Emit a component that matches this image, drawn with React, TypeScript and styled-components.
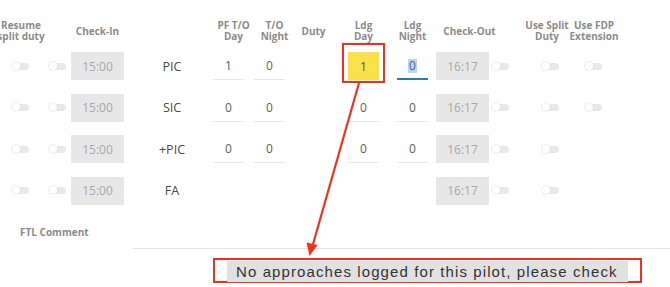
import { Fragment } from "react";
import styled, { createGlobalStyle, css } from "styled-components";

const GlobalStyle = createGlobalStyle`
    body {
        margin: 0;
        background: #fff;
        font-family: "Open Sans", "Noto Sans", sans-serif;
    }
`;

const COLS = "42px 29px 53px 89px 41px 41px 37px 63px 35px 61px 29px 54px 40px";

const Page = styled.div`
    position: relative;
    width: 670px;
    height: 287px;
    overflow: hidden;
    background: #fff;
`;

const HeaderRow = styled.div`
    display: grid;
    grid-template-columns: ${COLS};
    height: 34px;
    padding-top: 14px;
    margin-bottom: 4px;
`;

const HeaderCell = styled.div<{ $pad?: number }>`
    display: flex;
    align-items: center;
    justify-content: center;
    padding-left: ${(p) => p.$pad ?? 0}px;
    font-size: 10px;
    line-height: 11px;
    font-weight: 700;
    color: #8c8c8c;
    text-align: center;
    white-space: nowrap;
`;

const Body = styled.div`
    display: grid;
    grid-template-columns: ${COLS};
    grid-auto-rows: 28px;
    row-gap: 13.6px;
`;

const Cell = styled.div<{ $justify?: string; $pad?: number }>`
    position: relative;
    display: flex;
    align-items: center;
    justify-content: ${(p) => p.$justify ?? "center"};
    padding-left: ${(p) => p.$pad ?? 0}px;
`;

const Toggle = styled.span`
    position: relative;
    width: 16px;
    height: 7px;
    border-radius: 4px;
    background: #e8e8e8;
    &::before {
        content: "";
        position: absolute;
        left: -1px;
        top: -1px;
        width: 8px;
        height: 8px;
        border-radius: 50%;
        background: #fff;
        box-shadow: 0 0 0 0.6px #dcdcdc;
    }
`;

const TimeBox = styled.div`
    width: 53px;
    height: 28px;
    display: flex;
    align-items: center;
    justify-content: center;
    background: #e7e7e7;
    color: #a8a8a8;
    font-size: 12px;
`;

const Crew = styled.span`
    font-size: 12.5px;
    color: #4a4a4a;
    margin-left: 7px;
`;

const NumInput = styled.div<{ $focused?: boolean; $marked?: boolean }>`
    width: 31px;
    height: 28px;
    box-sizing: border-box;
    display: flex;
    align-items: center;
    justify-content: center;
    font-size: 12px;
    color: #606060;
    border-bottom: 1px solid #e8e8e8;
    ${(p) =>
        p.$focused &&
        css`
            border-bottom: 2px solid #2a7ea3;
            padding-top: 1px;
        `}
    ${(p) =>
        p.$marked &&
        css`
            background: #f9e14b;
            border-bottom: none;
            color: #555;
        `}
`;

const Selected = styled.span`
    background: #b5d5fc;
    padding: 0 1px;
    line-height: 14px;
`;

const RedFrame = styled.div`
    position: absolute;
    left: 10px;
    top: -9px;
    width: 43px;
    height: 40px;
    box-sizing: border-box;
    border: 2px solid #f0301c;
    pointer-events: none;
`;

const Footer = styled.div`
    margin-top: 22px;
`;

const CommentLabel = styled.div`
    margin-left: 20px;
    font-size: 10px;
    line-height: 10px;
    font-weight: 700;
    color: #8c8c8c;
`;

const Divider = styled.div`
    margin: 11px 0 0 133px;
    height: 1px;
    background: #e3e3e3;
`;

const MessageFrame = styled.div`
    margin: 9px 0 0 213px;
    width: 429px;
    height: 25px;
    box-sizing: border-box;
    border: 2px solid #f0301c;
    padding: 1px 0 0 12px;
    display: flex;
`;

const MessageText = styled.span`
    display: block;
    height: 21px;
    padding: 0 10px 0 9px;
    background: #e1e1e1;
    font-family: "Liberation Sans", Arial, sans-serif;
    font-size: 15px;
    letter-spacing: 1.1px;
    line-height: 21px;
    color: #333;
    white-space: nowrap;
`;

const Arrow = styled.svg`
    position: absolute;
    left: 0;
    top: 0;
    pointer-events: none;
`;

type Row = {
    crew: string;
    pf?: string;
    ton?: string;
    ldgDay?: string;
    ldgNight?: string;
    fdp: boolean;
    marked?: boolean;
};

const rows: Row[] = [
    { crew: "PIC", pf: "1", ton: "0", ldgDay: "1", ldgNight: "0", fdp: true, marked: true },
    { crew: "SIC", pf: "0", ton: "0", ldgDay: "0", ldgNight: "0", fdp: true },
    { crew: "+PIC", pf: "0", ton: "0", ldgDay: "0", ldgNight: "0", fdp: false },
    { crew: "FA", fdp: false },
];

export default function App() {
    return (
        <Page>
            <GlobalStyle />
            <HeaderRow>
                <HeaderCell>Resume<br />split duty</HeaderCell>
                <HeaderCell />
                <HeaderCell>Check-In</HeaderCell>
                <HeaderCell />
                <HeaderCell>PF T/O<br />Day</HeaderCell>
                <HeaderCell>T/O<br />Night</HeaderCell>
                <HeaderCell>Duty</HeaderCell>
                <HeaderCell>Ldg<br />Day</HeaderCell>
                <HeaderCell>Ldg<br />Night</HeaderCell>
                <HeaderCell $pad={18}>Check-Out</HeaderCell>
                <HeaderCell />
                <HeaderCell>Use Split<br />Duty</HeaderCell>
                <HeaderCell>Use FDP<br />Extension</HeaderCell>
            </HeaderRow>
            <Body>
                {rows.map((r) => (
                    <Fragment key={r.crew}>
                        <Cell><Toggle /></Cell>
                        <Cell $justify="flex-start" $pad={8}><Toggle /></Cell>
                        <Cell><TimeBox>15:00</TimeBox></Cell>
                        <Cell><Crew>{r.crew}</Crew></Cell>
                        <Cell $justify="flex-start">
                            {r.pf && <NumInput>{r.pf}</NumInput>}
                        </Cell>
                        <Cell $justify="flex-start">
                            {r.ton && <NumInput>{r.ton}</NumInput>}
                        </Cell>
                        <Cell />
                        <Cell $justify="flex-start" $pad={16}>
                            {r.ldgDay && <NumInput $marked={r.marked}>{r.ldgDay}</NumInput>}
                            {r.marked && <RedFrame />}
                        </Cell>
                        <Cell $justify="flex-start" $pad={2}>
                            {r.ldgNight && (
                                <NumInput $focused={r.marked}>
                                    {r.marked ? <Selected>{r.ldgNight}</Selected> : r.ldgNight}
                                </NumInput>
                            )}
                        </Cell>
                        <Cell $justify="flex-start" $pad={6}><TimeBox>16:17</TimeBox></Cell>
                        <Cell $justify="flex-start" $pad={2}><Toggle /></Cell>
                        <Cell $pad={7}><Toggle /></Cell>
                        <Cell>{r.fdp && <Toggle />}</Cell>
                    </Fragment>
                ))}
            </Body>
            <Footer>
                <CommentLabel>FTL Comment</CommentLabel>
                <Divider />
                <MessageFrame>
                    <MessageText>No approaches logged for this pilot, please check</MessageText>
                </MessageFrame>
            </Footer>
            <Arrow width="670" height="287" viewBox="0 0 670 287">
                <line x1="359" y1="83" x2="312.5" y2="246" stroke="#f0301c" strokeWidth="2.2" />
                <polygon points="309.5,256 317.5,245 306.5,242.5" fill="#f0301c" />
            </Arrow>
        </Page>
    );
}
